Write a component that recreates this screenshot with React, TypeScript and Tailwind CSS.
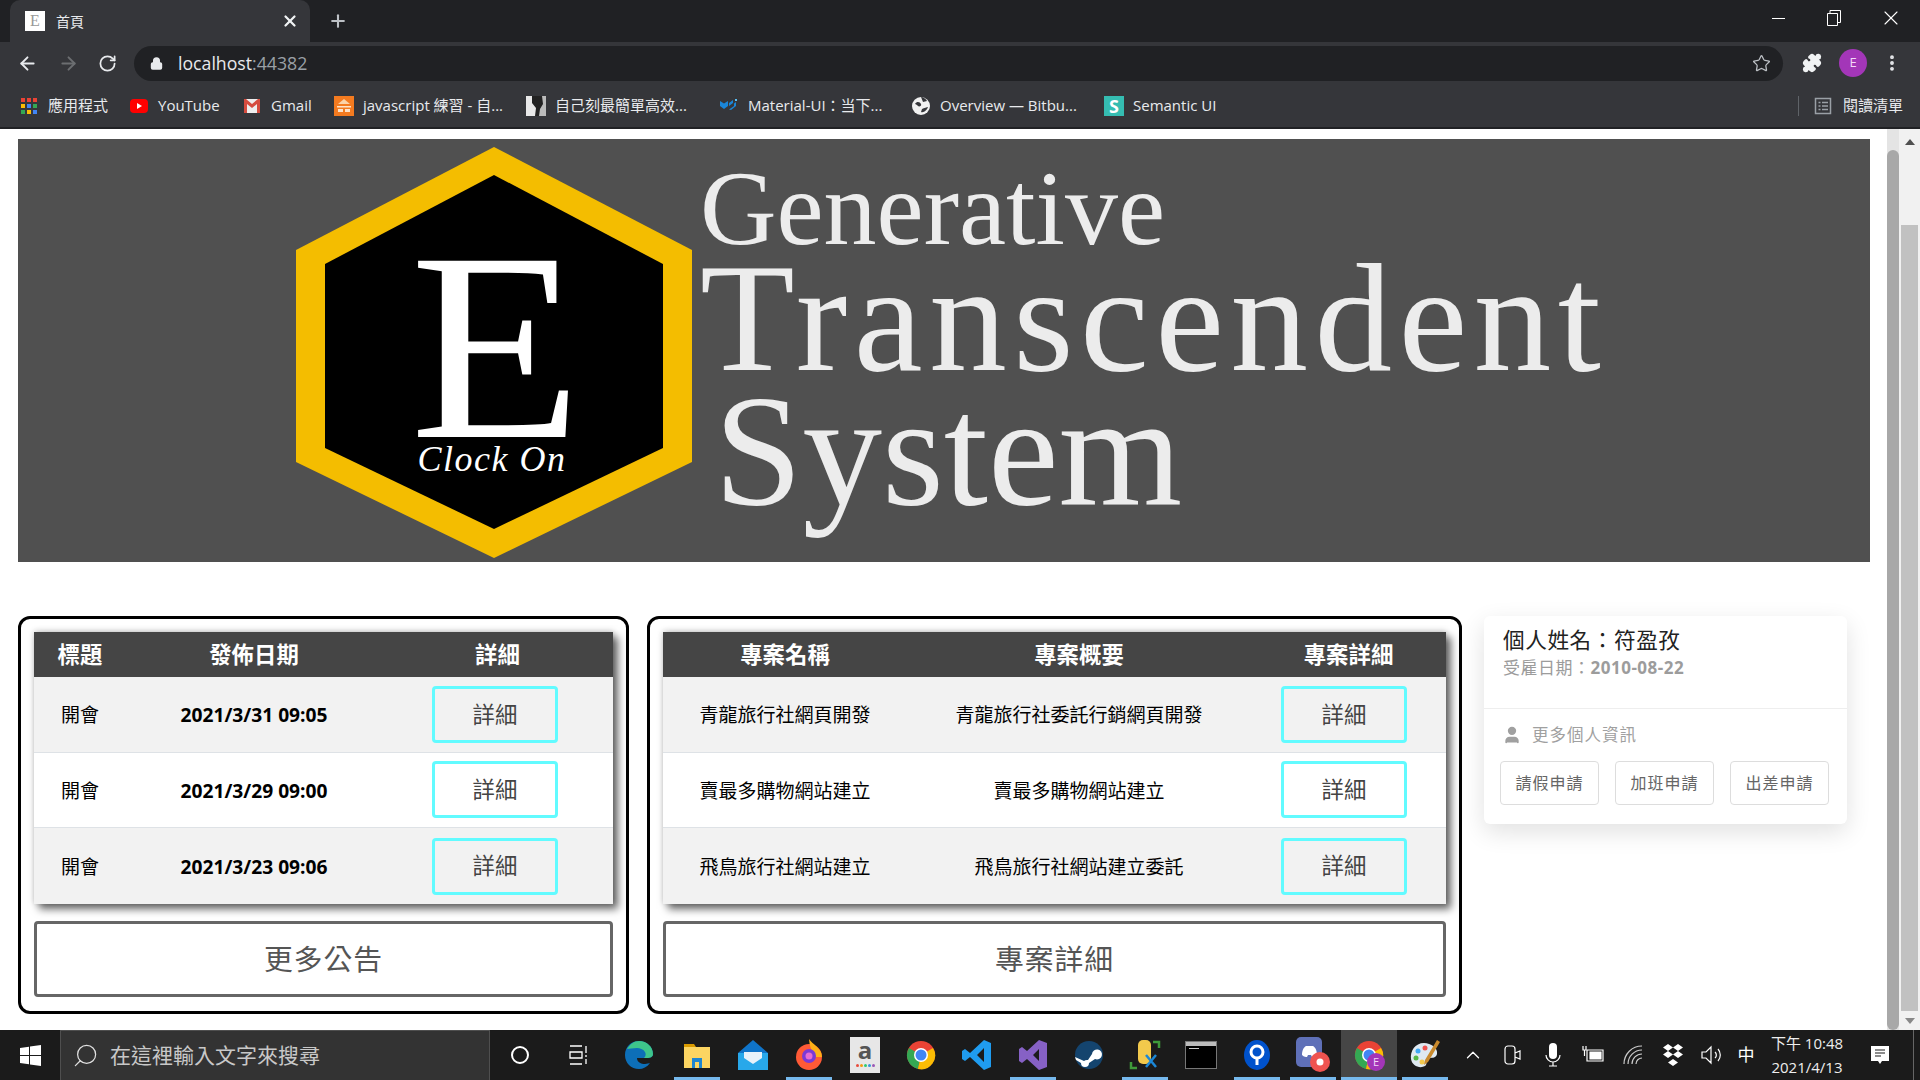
import React from "react";
import { ArrowLeft, ArrowRight, ChevronUp, Lock, MoreVertical, Plus, Puzzle, RotateCw, Search, Star, User, X } from "lucide-react";

const bookmarks = [
  { w: "w-[110px]", label: "應用程式", icon: "apps" },
  { w: "w-[113px]", label: "YouTube", icon: "yt" },
  { w: "w-[92px]", label: "Gmail", icon: "gmail" },
  { w: "w-[192px]", label: "javascript 練習 - 自...", icon: "js" },
  { w: "w-[193px]", label: "自己刻最簡單高效...", icon: "photo" },
  { w: "w-[192px]", label: "Material-UI：当下...", icon: "mui" },
  { w: "w-[193px]", label: "Overview — Bitbu...", icon: "bit" },
  { w: "w-[120px]", label: "Semantic UI", icon: "sem" },
];

const Favicon = ({ name }: { name: string }) => {
  if (name === "apps") {
    const colors = ["#ea4335", "#ea4335", "#ea4335", "#fbbc04", "#4285f4", "#34a853", "#34a853", "#fbbc04", "#4285f4"];
    return (
      <div className="mx-[2px] grid w-[16px] h-[16px] grid-cols-3 gap-[2px]">
        {colors.map((c, i) => (
          <span key={i} style={{ backgroundColor: c }} />
        ))}
      </div>
    );
  }
  if (name === "yt") {
    return (
      <svg width="20" height="20" viewBox="0 0 20 20">
        <rect x="1" y="3" width="18" height="14" rx="4" fill="#ff0000" />
        <path d="M8 7l5 3-5 3z" fill="#fff" />
      </svg>
    );
  }
  if (name === "gmail") {
    return (
      <svg width="20" height="20" viewBox="0 0 20 20">
        <rect x="2" y="3" width="16" height="14" fill="#eee" />
        <path d="M2 3v14h3V8l5 4 5-4v9h3V3h-2l-6 5-6-5z" fill="#d54c3f" />
      </svg>
    );
  }
  if (name === "js") {
    return (
      <svg width="20" height="20" viewBox="0 0 20 20">
        <rect width="20" height="20" fill="#f47b20" />
        <path d="M10 3l6 5H4z" fill="#fbd3a8" />
        <path d="M3 10h14v1.500H3zM4 13h5v3H4zM11 13h5v3h-5z" fill="#fde3c8" />
      </svg>
    );
  }
  if (name === "photo") {
    return (
      <svg width="20" height="20" viewBox="0 0 20 20">
        <rect width="20" height="20" fill="#bbb" />
        <path d="M0 0h13l-3 8 2 12H0z" fill="#e8e8e8" />
        <path d="M6 0h10l1 8-3 5-1 7H9l1-8-4-5z" fill="#222" />
      </svg>
    );
  }
  if (name === "mui") {
    return (
      <svg width="20" height="20" viewBox="0 0 20 20">
        <path d="M1 5l4 2.500L9 5v5l-4 3-4-3zM10 10l4-3V4l-4 3zM12 14l5-4V6l-2 1.500V10l-5 3.500z" fill="#1a86d8" />
        <path d="M16 3h2v2h-2z" fill="#5cc0f5" />
      </svg>
    );
  }
  if (name === "bit") {
    return (
      <svg width="20" height="20" viewBox="0 0 20 20">
        <circle cx="10" cy="10" r="9" fill="#f1f1f1" />
        <path d="M4 8c2-3 5-2 6 0s-2 3-3 2-2-2-3-2zM11 13c2-1 5-2 6-2-1 3-4 6-7 5z" fill="#35363a" />
        <path d="M10 1c2 0 5 2 6 4l-4 1z" fill="#35363a" />
      </svg>
    );
  }
  return (
    <div className="flex w-[20px] h-[20px] items-center justify-center bg-[#35bdb2] text-[18px] leading-none font-bold text-white">
      S
    </div>
  );
};

const BrowserChrome = () => (
  <div className="w-full shrink-0 bg-[#202124] text-white">
    <div className="flex h-[42px] items-end">
      <div className="ml-[10px] flex h-[42px] w-[300px] items-center rounded-t-[10px] bg-[#35363a] pl-[15px] pr-[11px]">
        <div className="flex w-[20px] h-[20px] items-center justify-center bg-white text-[16px] leading-none text-[#999] [font-family:'Liberation_Serif',serif]">
          E
        </div>
        <span className="ml-[11px] text-[14px] text-[#e8eaed]">首頁</span>
        <X className="ml-auto" size={18} strokeWidth={3} color="#f1f3f4" />
      </div>
      <div className="ml-[18px] flex h-[42px] items-center">
        <Plus size={20} strokeWidth={2.5} color="#bdc1c6" />
      </div>
      <div className="ml-auto flex h-[42px] items-start pt-[10px]">
        <div className="flex h-[16px] w-[55px] items-center justify-center">
          <span className="h-px w-[13px] bg-white" />
        </div>
        <div className="flex h-[16px] w-[56px] items-center justify-center">
          <svg width="14" height="16" viewBox="0 0 14 16" fill="none" stroke="#fff" strokeWidth="1">
            <path d="M.5 3.500h10v12H.5zM3 3.500V.5h10.500v12h-3" />
          </svg>
        </div>
        <div className="flex h-[16px] w-[58px] items-center justify-center">
          <X size={24} strokeWidth={1.1} color="#fff" />
        </div>
      </div>
    </div>
    <div className="flex h-[42px] items-center bg-[#35363a] pl-[17px] pr-[18px]">
      <ArrowLeft size={21} strokeWidth={2.2} color="#e8eaed" />
      <ArrowRight className="ml-[20px]" size={21} strokeWidth={2.2} color="#6c6e71" />
      <RotateCw className="ml-[19px]" size={19} strokeWidth={2.2} color="#e8eaed" />
      <div className="ml-[17px] flex h-[35px] flex-1 items-center rounded-full bg-[#202124] pl-[16px] pr-[12px]">
        <Lock size={13} strokeWidth={3} color="#e8eaed" fill="#e8eaed" />
        <span className="ml-[15px] pt-[1px] text-[17.700px] text-[#e8eaed]">
          localhost<span className="text-[#9aa0a6]">:44382</span>
        </span>
        <Star className="ml-auto" size={19} strokeWidth={1.6} color="#bdc1c6" />
      </div>
      <Puzzle className="ml-[19px]" size={20} color="#f1f3f4" fill="#f1f3f4" />
      <div className="ml-[17px] flex h-[28px] w-[28px] items-center justify-center rounded-full bg-[#a336b8] text-[13px] text-[#f3d8f8]">
        E
      </div>
      <MoreVertical className="ml-[15px]" size={20} strokeWidth={2.6} color="#e8eaed" />
    </div>
    <div className="flex h-[43px] items-center bg-[#35363a] pl-[19px] pr-[17px]">
      {bookmarks.map((b) => (
        <div key={b.label} className={`flex items-center ${b.w}`}>
          <Favicon name={b.icon} />
          <span className="ml-[9px] whitespace-nowrap text-[15px] text-[#e8eaed]">{b.label}</span>
        </div>
      ))}
      <div className="ml-auto flex items-center">
        <span className="mr-[15px] h-[20px] w-px bg-[#5f6368]" />
        <svg width="18" height="18" viewBox="0 0 18 18" fill="none" stroke="#9aa0a6" strokeWidth="1.500">
          <path d="M1.500 1.500h15v15h-15zM4.500 5.500h2M8 5.500h6M4.500 9h2M8 9h6M4.500 12.500h2M8 12.500h6" />
        </svg>
        <span className="ml-[11px] text-[15px] text-[#e8eaed]">閱讀清單</span>
      </div>
    </div>
    <div className="h-[2px] bg-[#202124]" />
  </div>
);

const Banner = () => (
  <div className="ml-[18px] mt-[10px] flex h-[423px] w-[1852px] overflow-hidden bg-[#505050] pl-[278px] pt-[8px]">
    <svg width="396" height="411" viewBox="0 0 396 411" className="shrink-0">
      <path d="M198 0L396 103V315L198 411L0 315V103Z" fill="#f4bd00" />
      <path d="M198 28L367 117V301L198 382L29 301V117Z" fill="#000" />
      <text x="114" y="290" fontSize="269" textLength="172" lengthAdjust="spacingAndGlyphs" fill="#fff" fontFamily="Liberation Serif">
        E
      </text>
      <text x="196" y="324" textAnchor="middle" fontSize="36" fontStyle="italic" fill="#fff" fontFamily="Liberation Serif" letterSpacing="1.500">
        Clock On
      </text>
    </svg>
    <div className="ml-[8px] flex flex-col text-[#ececec] [font-family:'Liberation_Serif',serif]">
      <div className="h-[124px] whitespace-nowrap text-[106px] leading-[124px]">Generative</div>
      <div className="h-[95px] whitespace-nowrap text-[155px] leading-[95px] tracking-[6.500px]">Transcendent</div>
      <div className="ml-[14px] h-[168px] whitespace-nowrap text-[159px] leading-[168px]">System</div>
    </div>
  </div>
);

const DetailButton = ({ odd }: { odd: boolean }) => (
  <div className={`flex h-[57px] w-[126px] items-center justify-center rounded-[4px] border-[3px] border-[#62fbff] text-[22.400px] text-[#444] ${odd ? "bg-[#f2f2f2]" : "bg-white"}`}>
    詳細
  </div>
);

const notices = ["2021/3/31 09:05", "2021/3/29 09:00", "2021/3/23 09:06"];
const projects = [
  ["青龍旅行社網頁開發", "青龍旅行社委託行銷網頁開發"],
  ["賣最多購物網站建立", "賣最多購物網站建立"],
  ["飛鳥旅行社網站建立", "飛鳥旅行社網站建立委託"],
];

const Panel = ({ width, more, children }: { width: string; more: string; children: React.ReactNode }) => (
  <div className={`flex h-[398px] shrink-0 flex-col rounded-[12px] border-[3px] border-black p-[13px] ${width}`}>
    <div className="shadow-[5px_5px_8px_rgba(0,0,0,0.6),0_-1px_6px_rgba(0,0,0,0.2)]">{children}</div>
    <div className="mt-[17px] flex h-[76px] shrink-0 items-center justify-center rounded-[4px] border-[3px] border-[#666] text-[28.800px] tracking-[1px] text-[#555]">
      {more}
    </div>
  </div>
);

const NoticeTable = () => (
  <>
    <div className="grid h-[45px] grid-cols-[92px_256px_231px] items-center bg-[#454545] text-center text-[22.400px] font-bold text-white">
      <div>標題</div>
      <div>發佈日期</div>
      <div>詳細</div>
    </div>
    {notices.map((d, i) => (
      <div key={d} className={`grid h-[75.670px] grid-cols-[92px_256px_231px] items-center border-b border-[#dee2e6] text-center text-black last:border-b-0 ${i % 2 === 0 ? "bg-[#f2f2f2]" : "bg-white"}`}>
        <div className="pt-[2px] text-[19px]">開會</div>
        <div className="pt-[2px] text-[19.200px] font-bold">{d}</div>
        <div className="pl-[50px]">
          <DetailButton odd={i % 2 === 0} />
        </div>
      </div>
    ))}
  </>
);

const ProjectTable = () => (
  <>
    <div className="grid h-[45px] grid-cols-[244px_344px_195px] items-center bg-[#454545] text-center text-[22.400px] font-bold text-white">
      <div>專案名稱</div>
      <div>專案概要</div>
      <div>專案詳細</div>
    </div>
    {projects.map((p, i) => (
      <div key={p[0]} className={`grid h-[75.670px] grid-cols-[244px_344px_195px] items-center border-b border-[#dee2e6] text-center text-[19px] text-black last:border-b-0 ${i % 2 === 0 ? "bg-[#f2f2f2]" : "bg-white"}`}>
        <div className="pt-[2px]">{p[0]}</div>
        <div className="pt-[2px]">{p[1]}</div>
        <div className="pl-[30px]">
          <DetailButton odd={i % 2 === 0} />
        </div>
      </div>
    ))}
  </>
);

const ProfileCard = () => (
  <div className="ml-[22px] flex h-[208px] w-[363px] shrink-0 flex-col rounded-[6px] bg-white shadow-[0_8px_24px_rgba(0,0,0,0.12)]">
    <div className="h-[93px] border-b border-[#eee] pl-[19px] pt-[6px]">
      <div className="text-[21.600px] leading-[36px] tracking-[0.600px] text-[#222]">個人姓名：符盈孜</div>
      <div className="text-[17px] leading-[20px] tracking-[0.500px] text-[#9c9c9c]">
        受雇日期：<span className="font-bold">2010-08-22</span>
      </div>
    </div>
    <div className="flex h-[52px] items-center pl-[18px] text-[16.500px] tracking-[1px] text-[#a0a0a0]">
      <User size={20} color="#a0a0a0" fill="#a0a0a0" />
      <span className="ml-[10px]">更多個人資訊</span>
    </div>
    <div className="flex gap-[16px] pl-[16px]">
      {["請假申請", "加班申請", "出差申請"].map((t) => (
        <div key={t} className="flex h-[44px] w-[99px] items-center justify-center rounded-[4px] border border-[#ddd] text-[16px] tracking-[1px] text-[#666]">
          {t}
        </div>
      ))}
    </div>
  </div>
);

const Scrollbars = () => (
  <div className="flex h-full w-[33px] shrink-0">
    <div className="h-full w-[12px] bg-[#e4e4e4] pt-[21px]">
      <div className="h-full rounded-t-[6px] rounded-b-[6px] bg-[#a8a8a8]" />
    </div>
    <div className="flex h-full w-[21px] flex-col items-center bg-[#f1f1f1]">
      <div className="flex h-[25px] items-center">
        <span className="h-0 w-0 border-x-[5px] border-b-[6px] border-x-transparent border-b-[#505050]" />
      </div>
      <div className="mt-[71px] h-[786px] w-[17px] bg-[#c1c1c1]" />
      <div className="flex h-[19px] items-center">
        <span className="h-0 w-0 border-x-[5px] border-t-[6px] border-x-transparent border-t-[#888]" />
      </div>
    </div>
  </div>
);

const Edge = () => (
  <svg width="30" height="30" viewBox="0 0 30 30">
    <path d="M1 15C1 7 7 1 15 1c8 0 14 6 14 13 0 3-3 4-6 4H13c0 4 4 6 8 6 2 0 4-1 5-1-3 4-7 6-11 6C7 29 1 23 1 15z" fill="#0d6fb8" />
    <path d="M3 9c3-5 7-8 12-8 8 0 14 6 14 13 0 3-3 4-6 4h-3c2-2 2-4 1-6-2-3-5-4-8-4-4 0-8 1-10 1z" fill="#3ec58b" />
  </svg>
);
const Files = () => (
  <svg width="30" height="30" viewBox="0 0 30 30">
    <path d="M2 4h10l2 3H2z" fill="#d99a00" />
    <rect x="2" y="7" width="26" height="21" fill="#fcd562" />
    <path d="M10 18h10v10h-3v-6h-4v6h-3z" fill="#1f86d0" />
  </svg>
);
const Mail = () => (
  <svg width="30" height="32" viewBox="0 0 30 32">
    <path d="M15 1l15 13v17H0V14z" fill="#0f74c9" />
    <path d="M0 14h30v17H0z" fill="#28a8ea" />
    <path d="M6 13h18v6l-9 6-9-6z" fill="#e8f2fa" />
  </svg>
);
const Firefox = () => (
  <svg width="30" height="32" viewBox="0 0 30 32">
    <circle cx="15" cy="18" r="13" fill="#ff5a36" />
    <path d="M15 0c3 5 13 9 13 18h-8c0-4-4-6-5-18z" fill="#ffb017" />
    <circle cx="15" cy="17" r="7" fill="#7b39d6" />
    <circle cx="15" cy="17" r="3.500" fill="#e66bd2" />
  </svg>
);
const Amazon = () => (
  <div className="flex h-[36px] w-[30px] flex-col items-center bg-[#e7e7e7] pt-[1px]">
    <span className="text-[24px] leading-[24px] font-bold text-[#555]">a</span>
    <div className="mt-[2px] flex gap-[1px]">
      <span className="h-[3px] w-[3px] rounded-full bg-[#e74c3c]" />
      <span className="h-[3px] w-[3px] rounded-full bg-[#f39c12]" />
      <span className="h-[3px] w-[3px] rounded-full bg-[#2ecc71]" />
      <span className="h-[3px] w-[3px] rounded-full bg-[#3498db]" />
      <span className="h-[3px] w-[3px] rounded-full bg-[#9b59b6]" />
    </div>
  </div>
);
const Chrome = ({ badge }: { badge?: boolean }) => (
  <svg width="32" height="32" viewBox="0 0 32 32">
    <circle cx="16" cy="16" r="14" fill="#ea4335" />
    <path d="M16 16L4 9A14 14 0 0 0 13 30z" fill="#34a853" />
    <path d="M16 16l12-7a14 14 0 0 1-15 21z" fill="#fbbc04" />
    <circle cx="16" cy="16" r="7" fill="#fff" />
    <circle cx="16" cy="16" r="5.500" fill="#4285f4" />
    {badge && <circle cx="23" cy="23" r="9" fill="#a336b8" />}
    {badge && (
      <text x="23" y="27" textAnchor="middle" fontSize="11" fill="#f3d8f8">
        E
      </text>
    )}
  </svg>
);
const VSCode = () => (
  <svg width="30" height="32" viewBox="0 0 30 32">
    <path d="M22 1l7 3v24l-7 3L8 18l-5 4-3-2v-8l3-2 5 4zM22 9l-7 7 7 7z" fill="#1f9cf0" />
  </svg>
);
const VS = () => (
  <svg width="30" height="32" viewBox="0 0 30 32">
    <path d="M21 1l8 3v24l-8 3L9 20l-5 4-3-2V10l3-2 5 4zM21 10l-6 6 6 6z" fill="#8661c5" />
  </svg>
);
const Steam = () => (
  <svg width="30" height="30" viewBox="0 0 30 30">
    <circle cx="15" cy="15" r="14" fill="#14446e" />
    <path d="M1 17l9 4a5 5 0 0 1 4-1l4-6a5 5 0 1 1 3 5l-6 4a4 4 0 0 1-8 0L2 20z" fill="#fff" />
  </svg>
);
const Tool = () => (
  <svg width="32" height="32" viewBox="0 0 32 32" fill="none">
    <rect x="9" y="1" width="13" height="24" rx="5" fill="#f2c94c" />
    <path d="M24 3h6v6M8 29H2v-6" stroke="#3f9a3a" strokeWidth="2.500" />
    <path d="M17 28l10-12M27 28L17 16" stroke="#1b87d6" strokeWidth="2.500" />
  </svg>
);
const Terminal = () => (
  <div className="h-[28px] w-[32px] border border-[#777] bg-black">
    <div className="h-[4px] bg-[#bbb]" />
    <div className="ml-[3px] mt-[2px] h-[1px] w-[10px] bg-[#ccc]" />
  </div>
);
const Sourcetree = () => (
  <svg width="28" height="32" viewBox="0 0 28 32">
    <ellipse cx="14" cy="16" rx="13" ry="15" fill="#0052cc" />
    <circle cx="14" cy="13" r="6" fill="none" stroke="#fff" strokeWidth="3" />
    <path d="M14 19v7" stroke="#fff" strokeWidth="3" />
  </svg>
);
const Discord = () => (
  <svg width="34" height="36" viewBox="0 0 34 36">
    <rect x="0" y="0" width="26" height="30" rx="5" fill="#5f70b8" />
    <path d="M6 18c0-5 2-8 4-9h7c2 1 4 4 4 9-2 2-4 2-5 2l-1-2h-3l-1 2c-1 0-3 0-5-2z" fill="#fff" />
    <circle cx="24" cy="25" r="10" fill="#ef5350" />
    <circle cx="24" cy="25" r="3.500" fill="#fff" />
  </svg>
);
const Paint = () => (
  <svg width="32" height="32" viewBox="0 0 32 32">
    <path d="M15 4C6 4 1 12 2 20c1 7 9 10 14 7 3-2 0-5 3-7s8 0 9-5c1-6-6-11-13-11z" fill="#dfe9f1" />
    <circle cx="9" cy="12" r="2.500" fill="#3fa9f5" />
    <circle cx="7" cy="19" r="2.500" fill="#55b848" />
    <circle cx="13" cy="23" r="2.500" fill="#f2c94c" />
    <circle cx="16" cy="9" r="2.500" fill="#ef5350" />
    <path d="M28 1l3 2-12 20-4 3 1-5z" fill="#c98a2d" />
  </svg>
);

const apps = [
  { on: true, el: <Files /> },
  { on: false, el: <Mail /> },
  { on: true, el: <Firefox /> },
  { on: false, el: <Amazon /> },
  { on: false, el: <Chrome /> },
  { on: false, el: <VSCode /> },
  { on: true, el: <VS /> },
  { on: false, el: <Steam /> },
  { on: true, el: <Tool /> },
  { on: false, el: <Terminal /> },
  { on: true, el: <Sourcetree /> },
  { on: true, el: <Discord /> },
];

const TrayIcon = ({ children, w = "w-[40px]" }: { children: React.ReactNode; w?: string }) => (
  <div className={`flex h-full shrink-0 items-center justify-center text-white ${w}`}>{children}</div>
);

const Taskbar = () => (
  <div className="flex h-[50px] w-full shrink-0 items-stretch bg-[#1b1b1b] text-white">
    <div className="flex w-[60px] shrink-0 items-center justify-center">
      <svg width="21" height="21" viewBox="0 0 21 21" fill="#fff">
        <path d="M0 3l9-1.300V10H0zM10 1.500L21 0v10H10zM0 11h9v8.300L0 18zM10 11h11v10l-11-1.500z" />
      </svg>
    </div>
    <div className="flex w-[430px] shrink-0 items-center border-x border-t border-[#4f4f4f] bg-[#333] pl-[11px]">
      <Search className="-scale-x-100" size={27} strokeWidth={1.1} color="#e0e0e0" />
      <span className="ml-[11px] text-[21px] text-[#c8c8c8]">在這裡輸入文字來搜尋</span>
    </div>
    <TrayIcon w="w-[59px]">
      <span className="h-[18px] w-[18px] rounded-full border-[2.500px] border-white" />
    </TrayIcon>
    <TrayIcon w="w-[60px]">
      <svg width="20" height="20" viewBox="0 0 20 20" fill="none" stroke="#fff" strokeWidth="1.300">
        <path d="M1 1h12M1 19h12M1 7h12v6H1zM17 1v7M17 10v2M17 14v5" />
      </svg>
    </TrayIcon>
    <TrayIcon w="w-[60px]">
      <Edge />
    </TrayIcon>
    {apps.map((a, i) => (
      <div key={i} className="flex h-full w-[56px] shrink-0 items-center justify-center">
        <div className={`flex h-full w-[46px] items-center justify-center border-b-[3px] pt-[3px] ${a.on ? "border-[#76b9ed]" : "border-transparent"}`}>{a.el}</div>
      </div>
    ))}
    <div className="flex h-full w-[56px] shrink-0 items-center justify-center border-b-[3px] border-[#76b9ed] bg-[#464646] pt-[3px]">
      <Chrome badge />
    </div>
    <div className="flex h-full w-[56px] shrink-0 items-center justify-center">
      <div className="flex h-full w-[46px] items-center justify-center border-b-[3px] border-[#76b9ed] pt-[3px]">
        <Paint />
      </div>
    </div>
    <TrayIcon>
      <ChevronUp size={22} strokeWidth={1.4} />
    </TrayIcon>
    <TrayIcon>
      <svg width="18" height="22" viewBox="0 0 18 22" fill="none" stroke="#fff" strokeWidth="1.200">
        <path d="M1 5a3 3 0 0 1 3-3h4a3 3 0 0 1 3 3v12a3 3 0 0 1-3 3H4a3 3 0 0 1-3-3zM11 9l5-2v8l-5-2" />
      </svg>
    </TrayIcon>
    <TrayIcon>
      <svg width="16" height="24" viewBox="0 0 16 24">
        <rect x="4" y="0" width="8" height="16" rx="4" fill="#fff" />
        <path d="M1 12a7 7 0 0 0 14 0M8 19v4M4 23h8" fill="none" stroke="#fff" strokeWidth="1.200" />
      </svg>
    </TrayIcon>
    <TrayIcon>
      <svg width="22" height="20" viewBox="0 0 22 20" fill="none" stroke="#fff" strokeWidth="1.200">
        <path d="M5 5h16v11H5z" />
        <path d="M8 7h11v7H8z" fill="#fff" />
        <path d="M1 1v4h3V1M2.500 5v6" />
      </svg>
    </TrayIcon>
    <TrayIcon>
      <svg width="20" height="20" viewBox="0 0 20 20" fill="none" stroke="#ccc" strokeWidth="1.200">
        <path d="M1 19a18 18 0 0 1 18-18M5 19a14 14 0 0 1 14-14M9 19a10 10 0 0 1 10-10M13 19a6 6 0 0 1 6-6" />
      </svg>
    </TrayIcon>
    <TrayIcon>
      <svg width="20" height="22" viewBox="0 0 20 22" fill="#fff">
        <path d="M5 0l5 3.500L5 7 0 3.500zM15 0l5 3.500L15 7l-5-3.500zM5 7l5 3.500L5 14l-5-3.500zM15 7l5 3.500-5 3.500-5-3.500zM10 15l5 3.500-5 3.500-5-3.500z" />
      </svg>
    </TrayIcon>
    <TrayIcon w="w-[38px]">
      <svg width="22" height="20" viewBox="0 0 22 20" fill="none" stroke="#fff" strokeWidth="1.200">
        <path d="M1 7h4l5-5v16l-5-5H1zM14 7a4 4 0 0 1 0 6M17 4a9 9 0 0 1 0 12" />
      </svg>
    </TrayIcon>
    <TrayIcon w="w-[30px]">
      <span className="text-[17px]">中</span>
    </TrayIcon>
    <div className="flex h-full w-[92px] shrink-0 flex-col items-center justify-center text-[15px] leading-[24px] text-[#eee]">
      <span>下午 10:48</span>
      <span>2021/4/13</span>
    </div>
    <TrayIcon w="w-[54px]">
      <svg width="20" height="20" viewBox="0 0 20 20">
        <path d="M1 1h18v15h-7l-2 3-2-3H1z" fill="#fff" />
        <path d="M5 5h10M5 8h10M5 11h6" stroke="#1b1b1b" strokeWidth="1.200" />
      </svg>
    </TrayIcon>
    <div className="ml-[6px] w-px bg-[#666]" />
  </div>
);

const App = () => (
  <div className="flex h-screen w-full flex-col overflow-hidden bg-white [font-family:'Open_Sans','Noto_Sans_CJK_TC',sans-serif]">
    <BrowserChrome />
    <div className="flex min-h-0 flex-1">
      <div className="min-w-0 flex-1">
        <Banner />
        <div className="ml-[18px] mt-[54px] flex items-start">
          <Panel width="w-[611px]" more="更多公告">
            <NoticeTable />
          </Panel>
          <div className="w-[18px] shrink-0" />
          <Panel width="w-[815px]" more="專案詳細">
            <ProjectTable />
          </Panel>
          <ProfileCard />
        </div>
      </div>
      <Scrollbars />
    </div>
    <Taskbar />
  </div>
);

export default App;
